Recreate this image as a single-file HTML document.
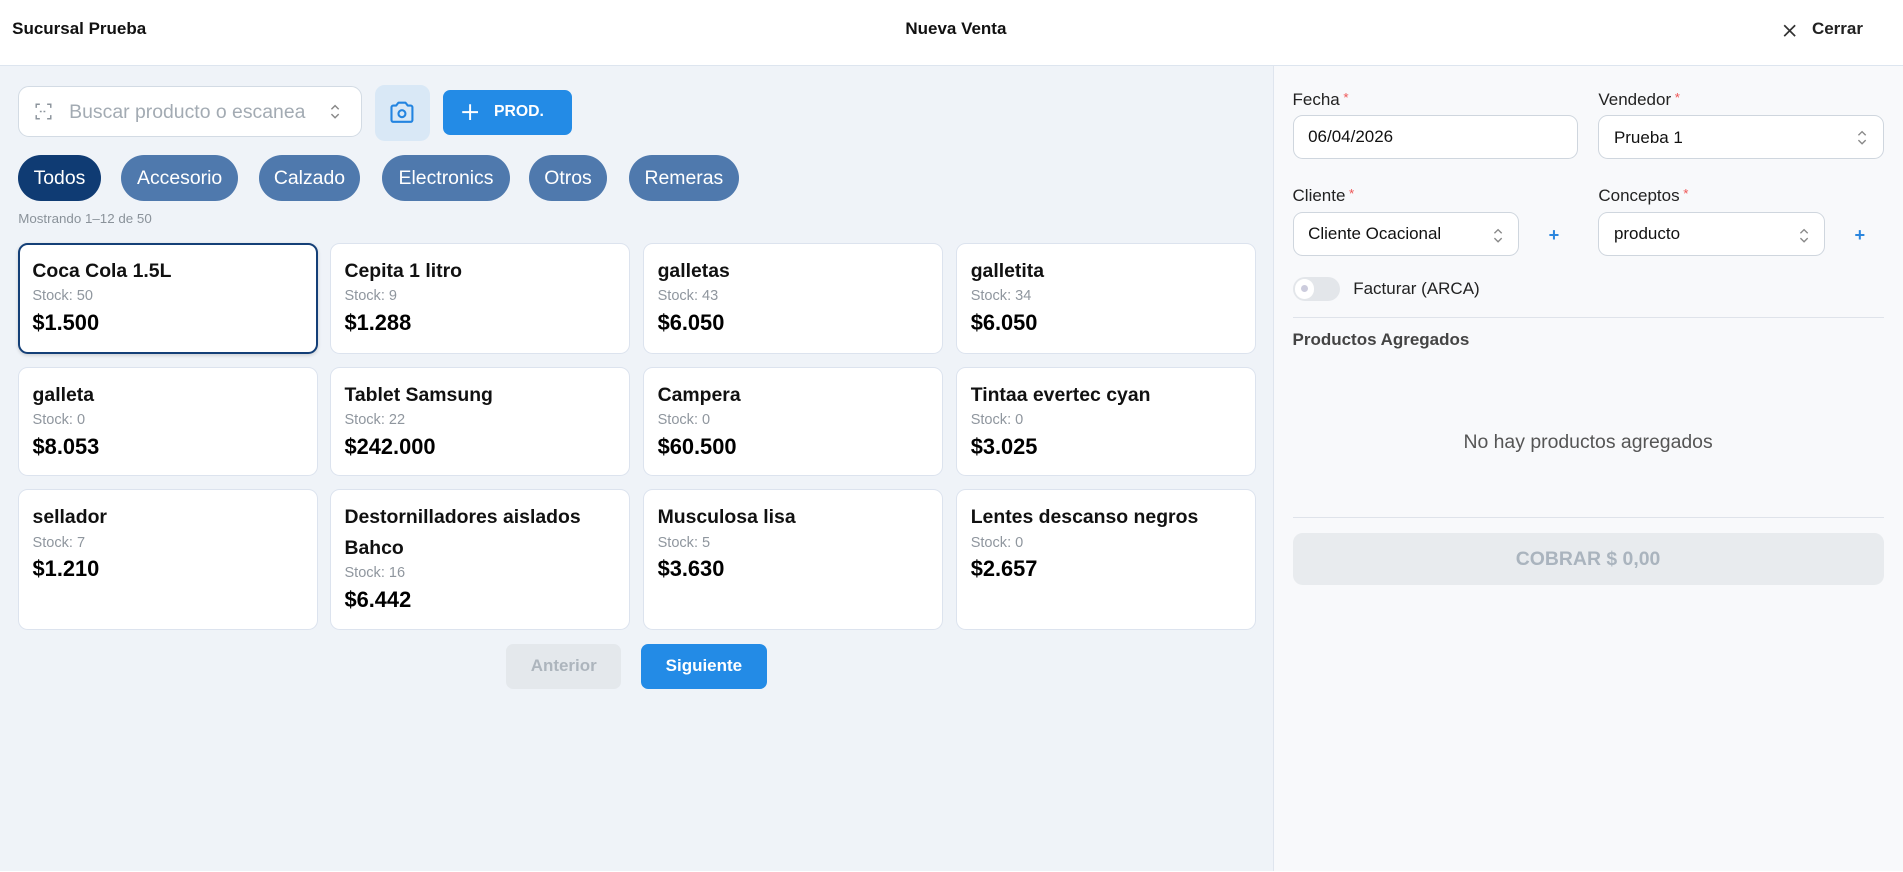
<!DOCTYPE html>
<html><head><meta charset="utf-8">
<style>
html,body{margin:0;padding:0;}
body{width:1568px;height:718px;zoom:1.21365;overflow:hidden;font-family:"Liberation Sans",Arial,sans-serif;background:#fff;position:relative;}
.abs{position:absolute;}
.hdr{left:0;top:0;width:1568px;height:54px;background:#fff;border-bottom:1px solid #dde5ef;box-sizing:border-box;}
.left{left:0;top:54px;width:1049px;height:664px;background:#eff3f8;}
.right{left:1049px;top:54px;width:519px;height:664px;background:#f8f9fb;border-left:1px solid #dfe5ee;box-sizing:border-box;}
.chip{top:128px;height:38px;border-radius:19px;background:#4f79ad;color:#fff;font-size:16px;line-height:38px;text-align:center;}
.card{background:#fff;border:1px solid #dce3ee;border-radius:8px;box-sizing:border-box;padding:10px 11px;width:247px;}
.card .n{font-size:16px;font-weight:bold;color:#111;line-height:25px;}
.card .s{font-size:12px;color:#8f969e;line-height:15px;margin-top:1px;}
.card .p{font-size:18px;font-weight:bold;color:#000;line-height:24px;margin-top:2px;}
.lbl{font-size:14px;color:#222;}
.lbl b{color:#e55;font-weight:normal;font-size:11px;vertical-align:top;margin-left:3px;}
.inp{height:36px;background:#fff;border:1px solid #cfd6de;border-radius:8px;box-sizing:border-box;font-size:14px;color:#111;line-height:34px;padding-left:12px;}
.arr{position:absolute;right:12px;top:10px;}
.plus{color:#2b86de;font-size:15px;font-weight:bold;}
</style></head><body>
<div class="abs hdr"></div>
<div class="abs" style="left:10px;top:16px;font-size:14px;font-weight:bold;color:#111">Sucursal Prueba</div>
<div class="abs" style="left:746px;top:16px;font-size:14px;font-weight:bold;color:#111">Nueva Venta</div>
<svg class="abs" style="left:1469px;top:20px" width="11" height="11" viewBox="0 0 11 11"><path d="M1 1L10 10M10 1L1 10" stroke="#333" stroke-width="1.4"/></svg>
<div class="abs" style="left:1493px;top:16px;font-size:14px;font-weight:bold;color:#222">Cerrar</div>

<div class="abs left"></div>
<div class="abs right"></div>

<div class="abs" style="left:15px;top:71px;width:283px;height:42px;background:#fff;border:1px solid #d3dbe4;border-radius:9px;box-sizing:border-box"></div>
<svg class="abs" style="left:29px;top:85px" width="14" height="14" viewBox="0 0 14 14" fill="none" stroke="#8c949c" stroke-width="1.2"><path d="M1 4V1h3M10 1h3v3M13 10v3h-3M4 13H1v-3"/><path d="M4 7h6" stroke-dasharray="1.5 1.5"/></svg>
<div class="abs" style="left:57px;top:83px;font-size:16px;color:#a3abb3">Buscar producto o escanea</div>
<svg class="abs" style="left:271px;top:84px" width="10" height="16" viewBox="0 0 10 16" fill="none" stroke="#888" stroke-width="1.2"><path d="M2 6l3-3 3 3M2 10l3 3 3-3"/></svg>
<div class="abs" style="left:309px;top:70px;width:45px;height:46px;background:#d9e8f6;border-radius:8px"></div>
<svg class="abs" style="left:320px;top:81px" width="23" height="23" viewBox="0 0 24 24" fill="none" stroke="#2384e0" stroke-width="1.8" stroke-linejoin="round"><path d="M3 8a1.5 1.5 0 0 1 1.5-1.5h2.5l2-2.5h6l2 2.5h2.5A1.5 1.5 0 0 1 21 8v11a1.5 1.5 0 0 1-1.5 1.5h-15A1.5 1.5 0 0 1 3 19z"/><circle cx="12" cy="13.5" r="3"/></svg>
<div class="abs" style="left:365px;top:74px;width:106px;height:37px;background:#238be6;border-radius:6px;color:#fff"></div>
<svg class="abs" style="left:380px;top:85px" width="15" height="15" viewBox="0 0 15 15"><path d="M7.5 1v13M1 7.5h13" stroke="#fff" stroke-width="1.6"/></svg>
<div class="abs" style="left:407px;top:85px;font-size:13px;font-weight:bold;color:#fff">PROD.</div>

<div class="abs chip" style="left:15px;width:68px;background:#0f3b73">Todos</div>
<div class="abs chip" style="left:100px;width:96px">Accesorio</div>
<div class="abs chip" style="left:213px;width:84px">Calzado</div>
<div class="abs chip" style="left:315px;width:105px">Electronics</div>
<div class="abs chip" style="left:436px;width:64px">Otros</div>
<div class="abs chip" style="left:518px;width:91px">Remeras</div>
<div class="abs" style="left:15px;top:174px;font-size:11px;color:#8a929a">Mostrando 1–12 de 50</div>

<div class="abs card" style="left:15px;top:200px;height:92px;border:2px solid #143f77;padding:9px 10px;box-shadow:0 1px 3px rgba(0,0,0,.15)"><div class="n">Coca Cola 1.5L</div><div class="s">Stock: 50</div><div class="p">$1.500</div></div>
<div class="abs card" style="left:272px;top:200px;height:92px"><div class="n">Cepita 1 litro</div><div class="s">Stock: 9</div><div class="p">$1.288</div></div>
<div class="abs card" style="left:530px;top:200px;height:92px"><div class="n">galletas</div><div class="s">Stock: 43</div><div class="p">$6.050</div></div>
<div class="abs card" style="left:788px;top:200px;height:92px"><div class="n">galletita</div><div class="s">Stock: 34</div><div class="p">$6.050</div></div>

<div class="abs card" style="left:15px;top:302px;height:90px"><div class="n">galleta</div><div class="s">Stock: 0</div><div class="p">$8.053</div></div>
<div class="abs card" style="left:272px;top:302px;height:90px"><div class="n">Tablet Samsung</div><div class="s">Stock: 22</div><div class="p">$242.000</div></div>
<div class="abs card" style="left:530px;top:302px;height:90px"><div class="n">Campera</div><div class="s">Stock: 0</div><div class="p">$60.500</div></div>
<div class="abs card" style="left:788px;top:302px;height:90px"><div class="n">Tintaa evertec cyan</div><div class="s">Stock: 0</div><div class="p">$3.025</div></div>

<div class="abs card" style="left:15px;top:403px;height:116px"><div class="n">sellador</div><div class="s">Stock: 7</div><div class="p">$1.210</div></div>
<div class="abs card" style="left:272px;top:403px;height:116px"><div class="n">Destornilladores aislados Bahco</div><div class="s">Stock: 16</div><div class="p">$6.442</div></div>
<div class="abs card" style="left:530px;top:403px;height:116px"><div class="n">Musculosa lisa</div><div class="s">Stock: 5</div><div class="p">$3.630</div></div>
<div class="abs card" style="left:788px;top:403px;height:116px"><div class="n">Lentes descanso negros</div><div class="s">Stock: 0</div><div class="p">$2.657</div></div>

<div class="abs" style="left:417px;top:531px;width:95px;height:37px;background:#e4e8ec;border-radius:6px;color:#adb5bd;font-size:14px;font-weight:bold;text-align:center;line-height:37px">Anterior</div>
<div class="abs" style="left:528px;top:531px;width:104px;height:37px;background:#238be6;border-radius:6px;color:#fff;font-size:14px;font-weight:bold;text-align:center;line-height:37px">Siguiente</div>

<div class="abs lbl" style="left:1065px;top:74px">Fecha<b>*</b></div>
<div class="abs lbl" style="left:1317px;top:74px">Vendedor<b>*</b></div>
<div class="abs inp" style="left:1065px;top:95px;width:235px">06/04/2026</div>
<div class="abs inp" style="left:1317px;top:95px;width:235px;line-height:36px">Prueba 1<svg class="arr" width="10" height="16" viewBox="0 0 10 16" fill="none" stroke="#888" stroke-width="1.1"><path d="M2 6l3-3 3 3M2 10l3 3 3-3"/></svg></div>
<div class="abs lbl" style="left:1065px;top:153px">Cliente<b>*</b></div>
<div class="abs lbl" style="left:1317px;top:153px">Conceptos<b>*</b></div>
<div class="abs inp" style="left:1065px;top:175px;width:187px">Cliente Ocacional<svg class="arr" width="10" height="16" viewBox="0 0 10 16" fill="none" stroke="#888" stroke-width="1.1"><path d="M2 6l3-3 3 3M2 10l3 3 3-3"/></svg></div>
<div class="abs inp" style="left:1317px;top:175px;width:187px">producto<svg class="arr" width="10" height="16" viewBox="0 0 10 16" fill="none" stroke="#888" stroke-width="1.1"><path d="M2 6l3-3 3 3M2 10l3 3 3-3"/></svg></div>
<div class="abs plus" style="left:1276px;top:185px">+</div>
<div class="abs plus" style="left:1528px;top:185px">+</div>
<div class="abs" style="left:1065px;top:228px;width:39px;height:20px;border-radius:10px;background:#e3e6ea"></div>
<div class="abs" style="left:1067px;top:230px;width:16px;height:16px;border-radius:8px;background:#fff"></div>
<div class="abs" style="left:1072px;top:235px;width:6px;height:6px;border-radius:3px;background:#ccd"></div>
<div class="abs" style="left:1115px;top:230px;font-size:14px;color:#222">Facturar (ARCA)</div>
<div class="abs" style="left:1065px;top:261px;width:487px;height:1px;background:#dfe3ea"></div>
<div class="abs" style="left:1065px;top:272px;font-size:14px;font-weight:bold;color:#444">Productos Agregados</div>
<div class="abs" style="left:1065px;top:355px;width:487px;text-align:center;font-size:16px;color:#555">No hay productos agregados</div>
<div class="abs" style="left:1065px;top:426px;width:487px;height:1px;background:#dfe3ea"></div>
<div class="abs" style="left:1065px;top:439px;width:487px;height:43px;border-radius:8px;background:#e8ebee;text-align:center;line-height:43px;font-size:16px;font-weight:bold;color:#aab4be">COBRAR $ 0,00</div>
</body></html>
